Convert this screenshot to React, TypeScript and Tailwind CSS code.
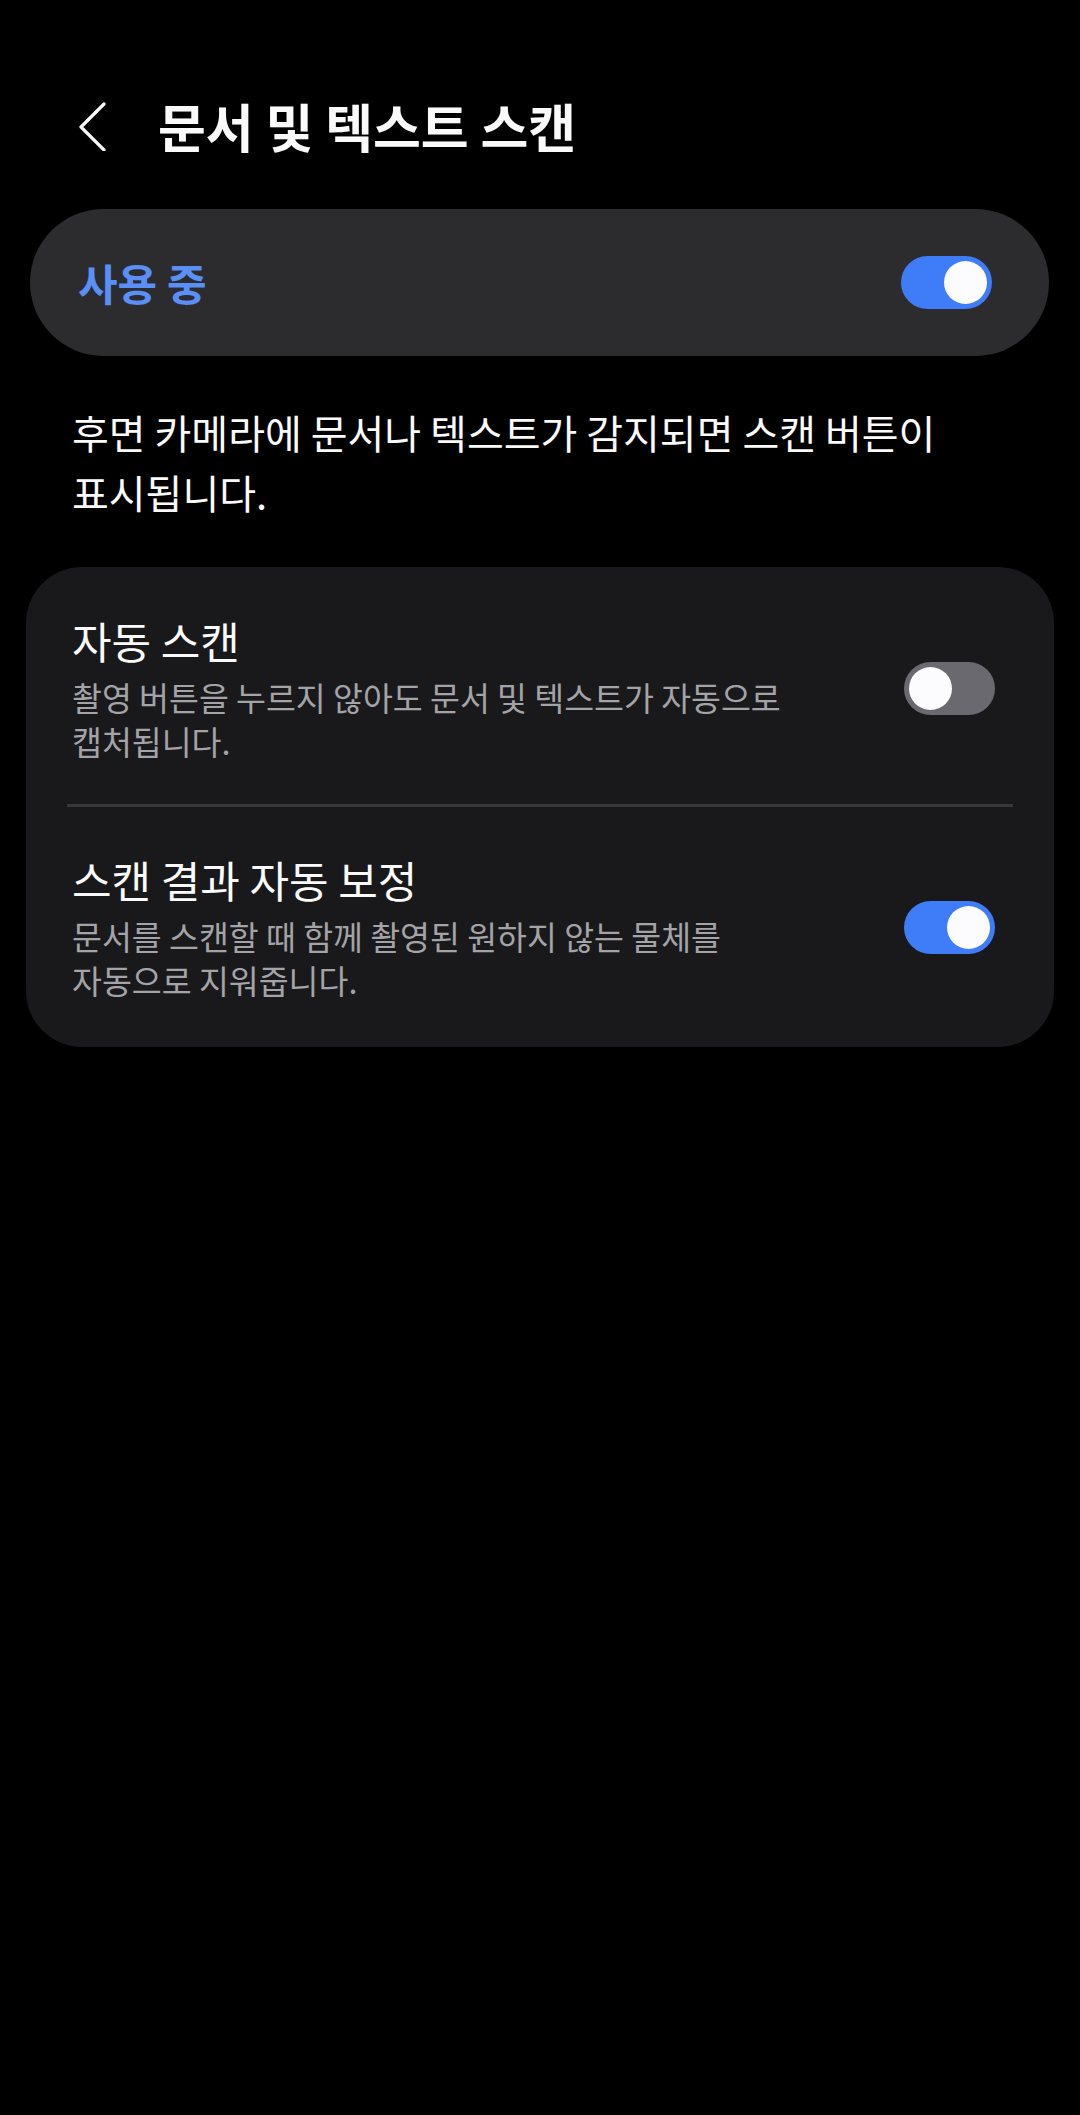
import React from 'react'

const font = { fontFamily: '"Noto Sans CJK KR", "Noto Sans", sans-serif' }

function Toggle({ on }: { on: boolean }) {
  return (
    <div
      className={`flex h-[53px] w-[91px] shrink-0 items-center rounded-full px-[5px] ${
        on ? 'justify-end bg-[#3e7cf8]' : 'justify-start bg-[#6a696f]'
      }`}
    >
      <div className="h-[43px] w-[43px] rounded-full bg-[#fcfcff]" />
    </div>
  )
}

function SettingRow({ title, desc, on }: { title: string; desc: string; on: boolean }) {
  return (
    <div className="flex items-center pl-[46px] pr-[59px]">
      <div className="w-[740px] break-keep">
        <div className="text-[43px] leading-[52px] text-[#fafafa]">{title}</div>
        <div className="mt-[9px] text-[32.5px] leading-[44px] text-[#a3a3a8]">{desc}</div>
      </div>
      <div className="ml-auto">
        <Toggle on={on} />
      </div>
    </div>
  )
}

export default function App() {
  return (
    <div className="min-h-[2115px] w-[1080px] bg-black pt-[94px]" style={font}>
      {/* header */}
      <div className="flex h-[64px] items-center pl-[78px]">
        <svg width="30" height="50" viewBox="0 0 30 50" fill="none" className="shrink-0">
          <path
            d="M26 3 L3 26 L26 49"
            stroke="#fafafa"
            strokeWidth="3.2"
            strokeLinecap="round"
            strokeLinejoin="round"
          />
        </svg>
        <h1 className="ml-[50px] text-[52px] font-bold leading-[64px] text-[#fafafa] break-keep">
          문서 및 텍스트 스캔
        </h1>
      </div>

      {/* master switch */}
      <div className="mx-[30px] mt-[51px] flex h-[147px] w-[1019px] items-center rounded-full bg-[#2c2c2e] pl-[48px] pr-[57px]">
        <span className="text-[43px] font-semibold text-[#5a8ff6]">사용 중</span>
        <div className="ml-auto">
          <Toggle on />
        </div>
      </div>

      <p className="mt-[46px] break-keep pl-[72px] pr-[40px] text-[40px] leading-[60px] text-[#fafafa]">
        후면 카메라에 문서나 텍스트가 감지되면 스캔 버튼이 표시됩니다.
      </p>

      {/* options */}
      <div className="ml-[26px] mt-[45px] w-[1028px] rounded-[56px] bg-[#19191b]">
        <div className="pb-[41px] pt-[47px]">
          <SettingRow
            title="자동 스캔"
            desc="촬영 버튼을 누르지 않아도 문서 및 텍스트가 자동으로 캡처됩니다."
            on={false}
          />
        </div>
        <div className="mx-[41px] h-[3px] bg-[#38383a]" />
        <div className="pb-[45px] pt-[46px]">
          <SettingRow
            title="스캔 결과 자동 보정"
            desc="문서를 스캔할 때 함께 촬영된 원하지 않는 물체를 자동으로 지워줍니다."
            on
          />
        </div>
      </div>
    </div>
  )
}
